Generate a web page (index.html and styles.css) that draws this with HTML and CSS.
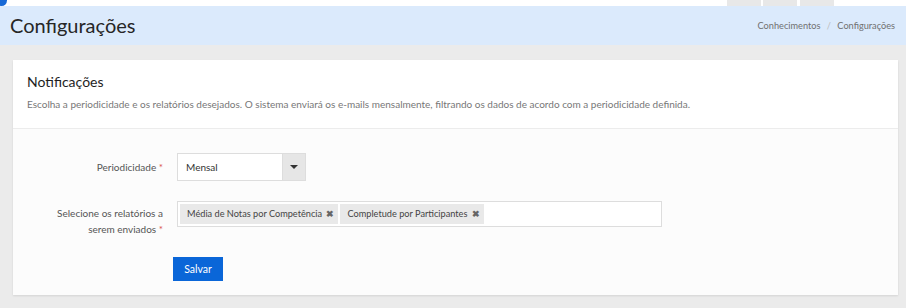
FILE: index.html
```html
<!DOCTYPE html>
<html lang="pt-BR">

<head>
    <meta charset="UTF-8">
    <meta name="viewport" content="width=device-width, initial-scale=1.0">
    <title>Configurações</title>
    <link rel="stylesheet" href="styles.css">
</head>

<body>
    <div class="topbar">
        <span class="badge"></span>
        <div class="tabs">
            <span class="tab"></span>
            <span class="tab"></span>
            <span class="tab"></span>
        </div>
    </div>

    <header class="page-header">
        <h1>Configurações</h1>
        <nav class="breadcrumb">
            <a href="#">Conhecimentos</a>
            <span class="sep">/</span>
            <span>Configurações</span>
        </nav>
    </header>

    <section class="content">
        <div class="card">
            <div class="card-head">
                <h2>Notificações</h2>
                <p>Escolha a periodicidade e os relatórios desejados. O sistema enviará os e-mails mensalmente, filtrando os dados de acordo com a periodicidade definida.</p>
            </div>

            <form class="card-body">
                <div class="row">
                    <label class="label" for="periodo">Periodicidade <span class="req">*</span></label>
                    <div class="select">
                        <span class="select-value" id="periodo">Mensal</span>
                        <span class="select-arrow"></span>
                    </div>
                </div>

                <div class="row">
                    <label class="label label-2">Selecione os relatórios a<br>serem enviados <span class="req">*</span></label>
                    <div class="multi">
                        <span class="tag">Média de Notas por Competência <b>&#x2716;</b></span>
                        <span class="tag">Completude por Participantes <b>&#x2716;</b></span>
                    </div>
                </div>

                <div class="actions">
                    <button type="button">Salvar</button>
                </div>
            </form>
        </div>
    </section>
</body>

</html>
```

FILE: styles.css
```css
body {
    margin: 0;
    background-color: #ebebeb;
    font-family: Lato, "Open Sans", sans-serif;
    color: #333;
}

.topbar {
    position: relative;
    height: 6px;
    background-color: #fff;
}

.badge {
    position: absolute;
    left: -4px;
    top: -5px;
    width: 11px;
    height: 11px;
    border-radius: 50%;
    background-color: #1769d6;
}

.tabs {
    display: flex;
    gap: 2px;
    padding-left: 727px;
}

.tab {
    width: 34px;
    height: 6px;
    background-color: #e8e8e8;
}

.tab:last-child {
    margin-left: 1px;
}

.page-header {
    display: flex;
    justify-content: space-between;
    align-items: center;
    height: 39px;
    padding: 0 11px 0 10px;
    background-color: #dbeafc;
}

.page-header h1 {
    margin: 0 0 2px;
    font-size: 20px;
    font-weight: 400;
    color: #262626;
}

.breadcrumb {
    font-size: 9.2px;
    color: #707070;
}

.breadcrumb a {
    color: #707070;
    text-decoration: none;
}

.breadcrumb .sep {
    color: #bbb;
    margin: 0 4px;
}

.content {
    padding: 15px 8px 13px 13px;
}

.card {
    background-color: #fcfcfc;
    box-shadow: 0 1px 2px rgba(0, 0, 0, 0.1);
}

.card-head {
    background-color: #fff;
    padding: 12px 14px 17px;
    border-bottom: 1px solid #ececec;
}

.card-head h2 {
    margin: 0 0 5px;
    font-size: 14px;
    line-height: 20px;
    font-weight: 400;
    color: #1e1e1e;
}

.card-head p {
    margin: 0;
    font-size: 10px;
    line-height: 14px;
    color: #777;
}

.card-body {
    padding: 24px 0 14px;
}

.row {
    display: flex;
    align-items: flex-start;
    margin-bottom: 20px;
}

.label {
    width: 150px;
    padding-top: 6px;
    margin-right: 14px;
    text-align: right;
    font-size: 10px;
    line-height: 16px;
    color: #555;
}

.label-2 {
    padding-top: 4px;
}

.req {
    color: #d9534f;
}

.select {
    display: flex;
    width: 127px;
    height: 26px;
    border: 1px solid #ddd;
    background-color: #fff;
}

.select-value {
    flex: 1;
    padding: 0 8px;
    font-size: 10px;
    line-height: 26px;
    color: #333;
}

.select-arrow {
    width: 22px;
    background-color: #e6e6e6;
    border-left: 1px solid #ddd;
    position: relative;
}

.select-arrow::after {
    content: "";
    position: absolute;
    left: 7px;
    top: 11px;
    border-left: 4px solid transparent;
    border-right: 4px solid transparent;
    border-top: 4px solid #333;
}

.multi {
    display: flex;
    gap: 2px;
    width: 479px;
    height: 20px;
    padding: 2px;
    border: 1px solid #ddd;
    background-color: #fff;
}

.tag {
    padding: 0 4px 0 7px;
    background-color: #e9e9e9;
    font-size: 9.2px;
    line-height: 20px;
    color: #444;
}

.tag b {
    margin-left: 2px;
    font-size: 9px;
    color: #666;
}

.actions {
    padding-left: 160px;
}

button {
    width: 50px;
    height: 24px;
    border: none;
    background-color: #0a66d8;
    color: #fff;
    font-family: Lato, "Open Sans", sans-serif;
    font-size: 10.5px;
    cursor: pointer;
}
```
